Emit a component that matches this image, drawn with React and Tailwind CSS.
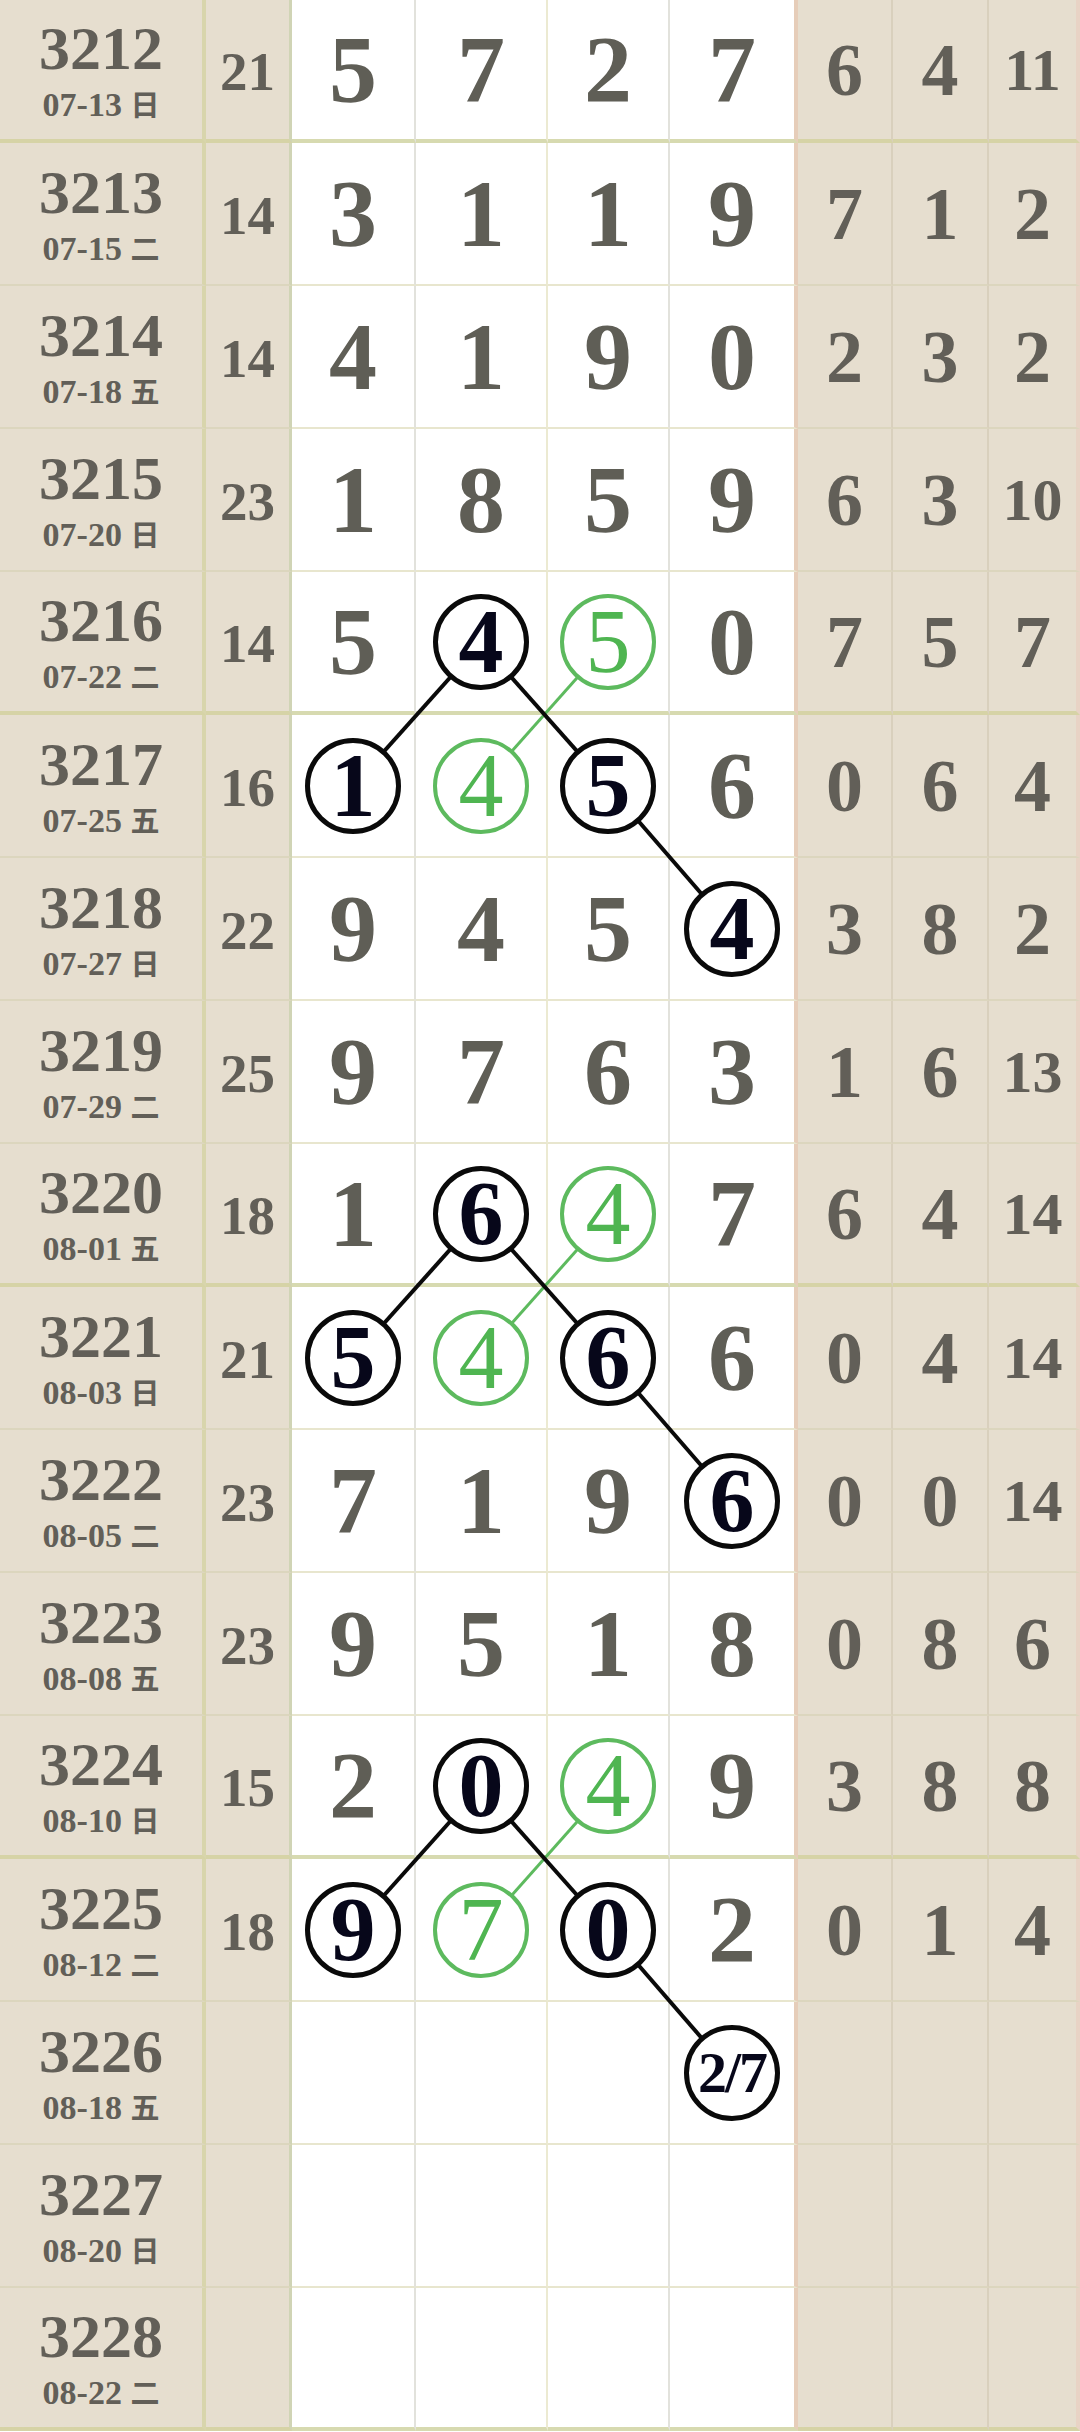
import React from "react";

const rows = [
  { id: "3212", d: "07-13", w: "日", s: "21", n: ["5", "7", "2", "7"], r: ["6", "4", "11"] },
  { id: "3213", d: "07-15", w: "二", s: "14", n: ["3", "1", "1", "9"], r: ["7", "1", "2"] },
  { id: "3214", d: "07-18", w: "五", s: "14", n: ["4", "1", "9", "0"], r: ["2", "3", "2"] },
  { id: "3215", d: "07-20", w: "日", s: "23", n: ["1", "8", "5", "9"], r: ["6", "3", "10"] },
  { id: "3216", d: "07-22", w: "二", s: "14", n: ["5", "B4", "G5", "0"], r: ["7", "5", "7"] },
  { id: "3217", d: "07-25", w: "五", s: "16", n: ["B1", "G4", "B5", "6"], r: ["0", "6", "4"] },
  { id: "3218", d: "07-27", w: "日", s: "22", n: ["9", "4", "5", "B4"], r: ["3", "8", "2"] },
  { id: "3219", d: "07-29", w: "二", s: "25", n: ["9", "7", "6", "3"], r: ["1", "6", "13"] },
  { id: "3220", d: "08-01", w: "五", s: "18", n: ["1", "B6", "G4", "7"], r: ["6", "4", "14"] },
  { id: "3221", d: "08-03", w: "日", s: "21", n: ["B5", "G4", "B6", "6"], r: ["0", "4", "14"] },
  { id: "3222", d: "08-05", w: "二", s: "23", n: ["7", "1", "9", "B6"], r: ["0", "0", "14"] },
  { id: "3223", d: "08-08", w: "五", s: "23", n: ["9", "5", "1", "8"], r: ["0", "8", "6"] },
  { id: "3224", d: "08-10", w: "日", s: "15", n: ["2", "B0", "G4", "9"], r: ["3", "8", "8"] },
  { id: "3225", d: "08-12", w: "二", s: "18", n: ["B9", "G7", "B0", "2"], r: ["0", "1", "4"] },
  { id: "3226", d: "08-18", w: "五", s: "", n: ["", "", "", "B2/7"], r: ["", "", ""] },
  { id: "3227", d: "08-20", w: "日", s: "", n: ["", "", "", ""], r: ["", "", ""] },
  { id: "3228", d: "08-22", w: "二", s: "", n: ["", "", "", ""], r: ["", "", ""] },
];

const RH = 143;
const CX = [353, 481, 608, 732];
const cy = (i) => i * RH + 71;

const blackLines = [
  [1, 4, 0, 5],
  [1, 4, 2, 5],
  [2, 5, 3, 6],
  [1, 8, 0, 9],
  [1, 8, 2, 9],
  [2, 9, 3, 10],
  [1, 12, 0, 13],
  [1, 12, 2, 13],
  [2, 13, 3, 14],
];
const greenLines = [
  [2, 4, 1, 5],
  [2, 8, 1, 9],
  [2, 12, 1, 13],
];

const font = { fontFamily: '"Liberation Serif", "Noto Sans CJK SC", serif' };

function Num({ v }) {
  if (!v) return null;
  if (v[0] === "B") {
    const t = v.slice(1);
    return (
      <div className="relative z-[2] flex h-[96px] w-[96px] items-center justify-center rounded-full border-[5px] border-[#0a0a0a] bg-white font-bold leading-none text-[#07071a]">
        <span className={t.length > 1 ? "text-[58px] tracking-[-2px]" : "text-[90px]"}>{t}</span>
      </div>
    );
  }
  if (v[0] === "G") {
    return (
      <div className="relative z-[2] flex h-[96px] w-[96px] items-center justify-center rounded-full border-[4px] border-[#5dba5e] bg-white text-[90px] font-normal leading-none text-[#4fb551]">
        {v.slice(1)}
      </div>
    );
  }
  return <span className="text-[96px] font-bold leading-none text-[#5f5e56]">{v}</span>;
}

export default function App() {
  return (
    <div className="relative w-[1080px] bg-[#e6decf]" style={font}>
      {rows.map((row, i) => {
        const thick = i % 4 === 0;
        const bb = thick ? "border-b-4" : "border-b-2";
        const beige = thick ? "border-b-[#d6d3a6]" : "border-b-[#dcd6be]";
        const white = thick ? "border-b-[#d7dab0]" : "border-b-[#e8e6ce]";
        return (
          <div
            key={row.id}
            className="grid h-[143px] grid-cols-[206px_86px_124px_132px_122px_128px_95px_96px_91px]"
          >
            <div className={`flex flex-col items-center justify-center gap-[9px] border-r-4 border-r-[#d8d5ac] ${bb} ${beige}`}>
              <span className="text-[62px] font-bold leading-none text-[#625f58]">{row.id}</span>
              <span className="text-[34px] font-bold leading-none text-[#625f58]">
                {row.d} <span className="text-[29px]">{row.w}</span>
              </span>
            </div>
            <div className={`flex items-center justify-center border-r-[3px] border-r-[#d0d4b5] ${bb} ${beige}`}>
              <span className="mt-[3px] text-[55px] font-bold leading-none text-[#625f58]">{row.s}</span>
            </div>
            {row.n.map((v, j) => (
              <div
                key={j}
                className={`flex items-center justify-center bg-white ${bb} ${white} ${
                  j === 3
                    ? "border-r-4 border-r-[#e6cdb9]"
                    : j === 1
                    ? "border-r-2 border-r-[#ecead2]"
                    : "border-r-2 border-r-[#e2e2dc]"
                }`}
              >
                <Num v={v} />
              </div>
            ))}
            {row.r.map((v, j) => (
              <div
                key={j}
                className={`flex items-center justify-center ${bb} ${beige} ${
                  j === 2 ? "border-r-4 border-r-[#e8d3c5]" : "border-r-2 border-r-[#d9d0bd]"
                }`}
              >
                <span
                  className={`font-bold leading-none text-[#625f58] ${
                    v.length > 1 ? "text-[60px]" : "text-[74px]"
                  }`}
                >
                  {v}
                </span>
              </div>
            ))}
          </div>
        );
      })}
      <svg
        className="pointer-events-none absolute left-0 top-0 z-[1]"
        width="1080"
        height={RH * rows.length}
      >
        {greenLines.map(([a, ra, b, rb], k) => (
          <line key={"g" + k} x1={CX[a]} y1={cy(ra)} x2={CX[b]} y2={cy(rb)} stroke="#5dba5e" strokeWidth="3" />
        ))}
        {blackLines.map(([a, ra, b, rb], k) => (
          <line key={"b" + k} x1={CX[a]} y1={cy(ra)} x2={CX[b]} y2={cy(rb)} stroke="#0a0a0a" strokeWidth="4" />
        ))}
      </svg>
    </div>
  );
}
